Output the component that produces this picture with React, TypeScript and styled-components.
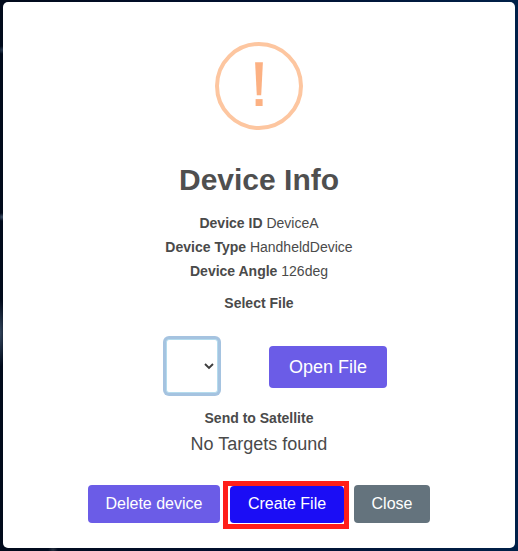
import React from "react";
import styled, { createGlobalStyle } from "styled-components";

const GlobalStyle = createGlobalStyle`
  *, *::before, *::after { box-sizing: border-box; }
  body {
    margin: 0;
    font-family: "Liberation Sans", Arial, sans-serif;
    color: #4a4a4a;
  }
`;

const Backdrop = styled.div`
  height: 551px;
  padding: 2px 3px 3px;
  overflow: hidden;
  background:
    radial-gradient(ellipse 7px 34px at 0 333px, #34465c, transparent),
    radial-gradient(circle 4px at 2px 50px, #26374d, transparent),
    radial-gradient(circle 4px at 2px 217px, #3d4f66, transparent),
    radial-gradient(circle 5px at 53px 550px, #26303f, transparent),
    linear-gradient(90deg, #010a1b, #001030 50%, #002048);
`;

const Modal = styled.section`
  display: flex;
  flex-direction: column;
  align-items: center;
  width: 512px;
  height: 546px;
  padding-top: 40px;
  border-radius: 5px;
  background: #fff;
`;

const WarningIcon = styled.svg`
  display: block;
  width: 88px;
  height: 88px;
`;

const Title = styled.h2`
  margin: 32px 0 0;
  font-size: 30px;
  line-height: 36px;
  color: #4f4f4f;
`;

const Details = styled.div`
  margin-top: 13px;
  font-size: 14px;
  line-height: 24px;
  text-align: center;
`;

const Label = styled.h3<{ $top: number }>`
  margin: ${(p) => p.$top}px 0 0;
  font-size: 14px;
  line-height: 24px;
`;

const FileRow = styled.div`
  display: flex;
  align-items: center;
  gap: 51px;
  height: 54px;
  margin: 24px 0 0 35px;
`;

const FileSelect = styled.button`
  display: flex;
  align-items: center;
  justify-content: flex-end;
  width: 52px;
  height: 54px;
  padding: 0 3px 0 0;
  border: 1px solid #b4dbed;
  border-radius: 3px;
  background: #fff;
  box-shadow: 0 0 0 3px #a5c3e0;
`;

const Button = styled.button<{ $color: string; $width: number }>`
  width: ${(p) => p.$width}px;
  height: 38px;
  padding: 0;
  border: 0;
  border-radius: 4px;
  background: ${(p) => p.$color};
  color: #fff;
  font-family: inherit;
  font-size: 16px;
`;

const OpenButton = styled(Button)`
  height: 42px;
  margin-top: 2px;
  font-size: 18px;
`;

const CreateButton = styled(Button)`
  height: 37px;
  padding-bottom: 1px;
`;

const Message = styled.p`
  margin: 1px 0 0;
  font-size: 18px;
  line-height: 27px;
`;

const Actions = styled.div`
  display: flex;
  align-items: flex-start;
  margin-top: 23px;
`;

const Highlight = styled.div`
  display: flex;
  width: 126px;
  height: 48px;
  margin: 0 5px 0 3px;
  padding: 0 0 0 2px;
  border: 5px solid #ff1f1a;
`;

const ActionSlot = styled.div`
  display: flex;
  padding-top: 4px;
`;

export default function App() {
  return (
    <>
      <GlobalStyle />
      <Backdrop>
        <Modal role="dialog" aria-label="Device Info">
          <WarningIcon viewBox="0 0 88 88" aria-hidden="true">
            <circle cx="44" cy="44" r="42" fill="none" stroke="#fdc6a0" strokeWidth="4" />
            <path d="M40.1 20.3h7.8l-1.7 32.9h-4.4z" fill="#fcb183" />
            <rect x="40.6" y="57.1" width="7" height="6.9" fill="#fcb183" />
          </WarningIcon>
          <Title>Device Info</Title>
          <Details>
            <div><b>Device ID</b> DeviceA</div>
            <div><b>Device Type</b> HandheldDevice</div>
            <div><b>Device Angle</b> 126deg</div>
          </Details>
          <Label $top={8}>Select File</Label>
          <FileRow>
            <FileSelect aria-label="Select file">
              <svg width="10" height="8" viewBox="0 0 10 8" fill="none">
                <path d="M1 2l4 4 4-4" stroke="#3d3d3d" strokeWidth="1.9" />
              </svg>
            </FileSelect>
            <OpenButton $color="#6b5ce7" $width={118}>Open File</OpenButton>
          </FileRow>
          <Label $top={13}>Send to Satellite</Label>
          <Message>No Targets found</Message>
          <Actions>
            <ActionSlot><Button $color="#6b5ce7" $width={132}>Delete device</Button></ActionSlot>
            <Highlight><CreateButton $color="#1b0df5" $width={114}>Create File</CreateButton></Highlight>
            <ActionSlot><Button $color="#64737d" $width={76}>Close</Button></ActionSlot>
          </Actions>
        </Modal>
      </Backdrop>
    </>
  );
}
